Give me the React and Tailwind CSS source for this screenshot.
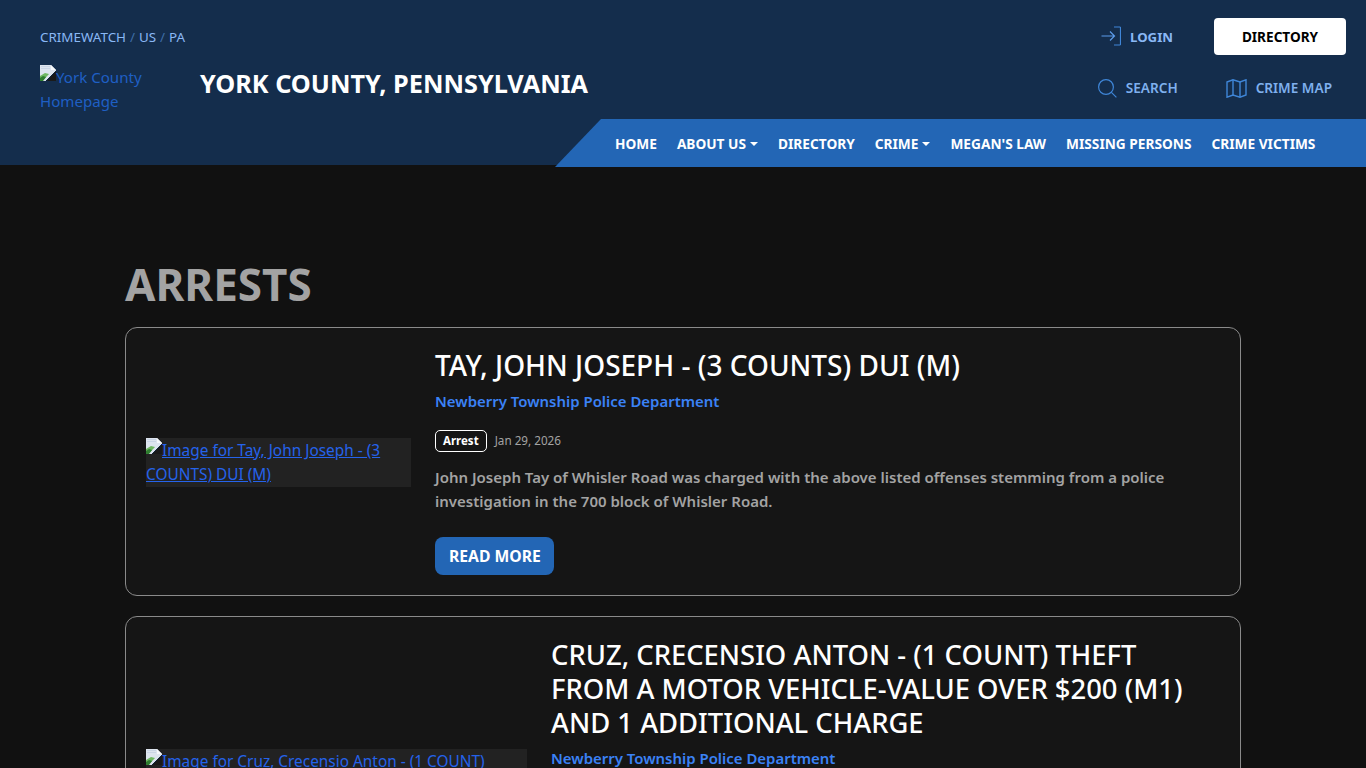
import React from "react";

function Broken() {
  return (
    <svg width="16" height="16" viewBox="0 0 16 16" className="inline-block align-[2px]">
      <path d="M0 0h11l5 5v1L6 16H0z" fill="#dde4ee" />
      <path d="M11 0v5h5z" fill="#f6f8fb" />
      <path d="M1 1.5h9M1 3.5h9" stroke="#c5d0e2" strokeWidth="0.8" />
      <path d="M0 11l5-3 4 1-6.5 7H0z" fill="#6fb761" />
      <path d="M0 13l3-2 3 1-3 4H0z" fill="#2f7d30" />
      <path d="M16 6v10H7z" fill="#1a1a1a" />
      <path d="M6 16L16 6" stroke="#10233a" strokeWidth="1" />
    </svg>
  );
}

function ArrowLogin() {
  return (
    <svg width="20" height="20" viewBox="0 0 20 20" fill="none" stroke="#3f86d8" strokeWidth="1.2">
      <path d="M13 1h5.7a.8.8 0 0 1 .8.8v16.4a.8.8 0 0 1-.8.8H13" />
      <path d="M0.5 10h13M9 5.5l4.5 4.5L9 14.5" stroke="#5b9bea" />
    </svg>
  );
}

function SearchIcon() {
  return (
    <svg width="19" height="19" viewBox="0 0 19 19" fill="none" stroke="#3f86d8" strokeWidth="1.2">
      <circle cx="8" cy="8" r="7.4" />
      <path d="M13.4 13.4l5 5" />
    </svg>
  );
}

function MapIcon() {
  return (
    <svg width="21" height="19" viewBox="0 0 21 19" fill="none" stroke="#3f86d8" strokeWidth="1.4">
      <path d="M1 3l6-2.2 7 2.2 6-2.2V16l-6 2.2L7 16l-6 2.2z" />
      <path d="M7 .8V16M14 3v15.2" />
    </svg>
  );
}

function Caret() {
  return <span className="ml-1 inline-block align-[3px] border-x-[4px] border-t-[4px] border-x-transparent border-t-white" />;
}

function Nav({ children, caret }) {
  return (
    <a className="pt-[2px] text-[13.7px] font-bold text-white whitespace-nowrap">
      {children}
      {caret && <Caret />}
    </a>
  );
}

function Card({ imgW, alt, title, titleClass, children }) {
  return (
    <article className="flex gap-6 rounded-xl border border-[#8a8a8a] bg-[#151515] p-5 mb-5">
      <div className={`shrink-0 ${imgW} pt-[2px] flex flex-col justify-center`}>
        <a className="block bg-[#222222] text-[15.4px] leading-6 text-[#2563eb] underline">
          <Broken />
          {alt}
        </a>
      </div>
      <div className="flex-1 min-w-0">
        <h2 className={`leading-[34px] font-medium text-white ${titleClass}`}>{title}</h2>
        <a className="block text-[14.95px] leading-6 font-semibold text-[#3b82f6]">Newberry Township Police Department</a>
        {children}
      </div>
    </article>
  );
}

export default function App() {
  return (
    <div className="h-[768px] overflow-hidden bg-[#111111] font-['Noto_Sans','Open_Sans',sans-serif]">
      <header className="h-[165px] bg-[#142d4c] flex flex-col">
        <div className="shrink-0 flex justify-between pl-10 pr-5 h-[119px]">
          <div>
            <div className="pt-[28px] text-[13.4px] leading-[18px] text-[#8ab8f5]">
              CRIMEWATCH <span className="text-[#3f6da8] px-[0.5px]">/</span> US <span className="text-[#3f6da8] px-[0.5px]">/</span> PA
            </div>
            <div className="flex mt-[19px]">
              <a className="block w-[120px] text-[15.1px] leading-6 text-[#1f5fc4]">
                <Broken />
                York County Homepage
              </a>
              <h1 className="ml-10 pt-[2px] text-[25.25px] leading-[32px] font-bold text-white whitespace-nowrap">YORK COUNTY, PENNSYLVANIA</h1>
            </div>
          </div>
          <div className="flex flex-col items-end">
            <div className="flex items-center mt-[18px]">
              <a className="flex items-center gap-[9px] text-[13.2px] font-bold text-[#8ab8f5]">
                <ArrowLogin />
                <span className="pt-[2px]">LOGIN</span>
              </a>
              <a className="ml-[41px] flex items-center justify-center w-[132px] h-[37px] pt-[2px] rounded-[4px] bg-white text-[13.6px] font-bold text-black">DIRECTORY</a>
            </div>
            <div className="flex items-center mt-[23px] pr-[14px]">
              <a className="flex items-center gap-[9px] text-[13.6px] font-semibold text-[#7fb0ee]">
                <SearchIcon />
                SEARCH
              </a>
              <a className="ml-[48px] flex items-center gap-[9px] text-[13.6px] font-semibold text-[#7fb0ee]">
                <MapIcon />
                CRIME MAP
              </a>
            </div>
          </div>
        </div>
        <nav className="shrink-0 ml-[555px] h-[48px] bg-[#2366b5] [clip-path:polygon(46px_0,100%_0,100%_100%,0_100%)] flex items-center gap-5 pl-[60px]">
          <Nav>HOME</Nav>
          <Nav caret>ABOUT US</Nav>
          <Nav>DIRECTORY</Nav>
          <Nav caret>CRIME</Nav>
          <Nav>MEGAN'S LAW</Nav>
          <Nav>MISSING PERSONS</Nav>
          <Nav>CRIME VICTIMS</Nav>
        </nav>
      </header>
      <main className="w-[1116px] mx-auto pt-[92px]">
        <h1 className="text-[44px] leading-[54px] font-bold text-[#a3a3a3] mb-[16px]">ARRESTS</h1>
        <Card imgW="w-[265px]" alt="Image for Tay, John Joseph - (3 COUNTS) DUI (M)" title="TAY, JOHN JOSEPH - (3 COUNTS) DUI (M)" titleClass="text-[28px] mb-[7px]">
          <div className="flex items-center gap-2 mt-[17px]">
            <span className="rounded-[5px] border border-white px-[7px] text-[11.5px] leading-[20px] font-bold text-white">Arrest</span>
            <span className="text-[11.7px] text-[#a3a3a3]">Jan 29, 2026</span>
          </div>
          <p className="mt-[13px] text-[15px] leading-6 font-semibold text-[#a3a3a3]">
            John Joseph Tay of Whisler Road was charged with the above listed offenses stemming from a police investigation in the 700 block of Whisler Road.
          </p>
          <a className="mt-[24px] inline-flex items-center h-[38px] pl-[14px] pr-[13px] pt-[2px] rounded-lg bg-[#2366b5] text-[15.7px] font-bold text-white">READ MORE</a>
        </Card>
        <Card imgW="w-[381px]" alt="Image for Cruz, Crecensio Anton - (1 COUNT) THEFT FROM A MOTOR VEHICLE-VALUE OVER $200 (M1) AND 1 ADDITIONAL CHARGE" title="CRUZ, CRECENSIO ANTON - (1 COUNT) THEFT FROM A MOTOR VEHICLE-VALUE OVER $200 (M1) AND 1 ADDITIONAL CHARGE" titleClass="text-[27.4px] pt-px mb-[6px]">
          <div className="h-[162px]" />
        </Card>
      </main>
    </div>
  );
}
